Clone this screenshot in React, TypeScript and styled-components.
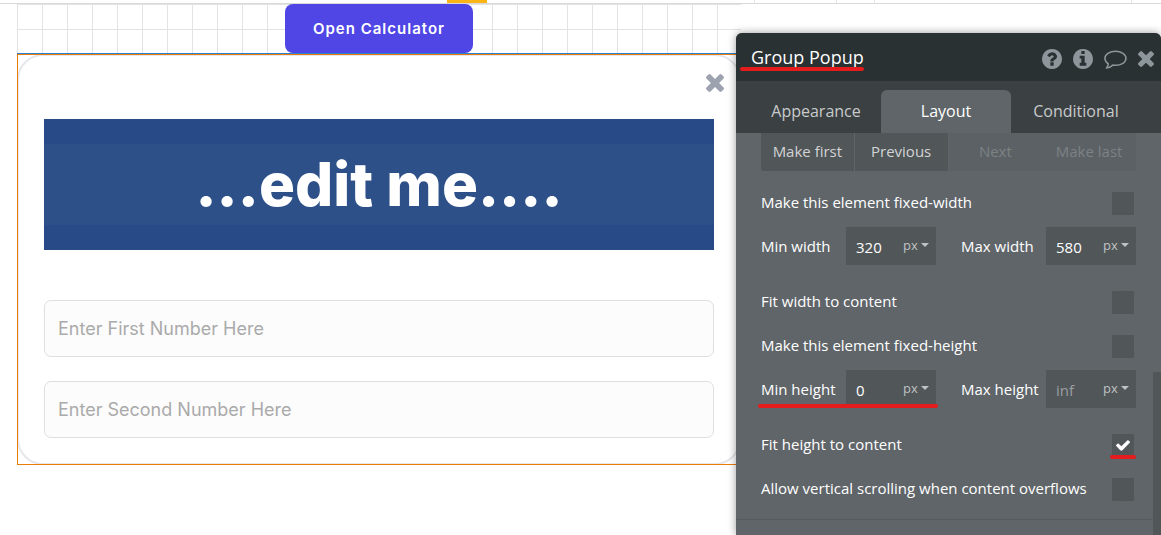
import React, { useState } from 'react';
import styled, { createGlobalStyle } from 'styled-components';

const GlobalStyle = createGlobalStyle`
  * { box-sizing: border-box; }
  body { margin: 0; background: #fff; font-family: "Open Sans", "Noto Sans", sans-serif; }
  button, input, select { font: inherit; color: inherit; border: 0; margin: 0; padding: 0; background: none; }
  button { cursor: pointer; }
`;

const Page = styled.div`
  display: flex;
  flex-direction: column;
  height: 100vh;
  overflow: hidden;
`;

const Ruler = styled.div`
  display: flex;
  justify-content: space-between;
  flex: none;
  height: 4px;
  border-bottom: 1px solid #d9d9d9;
  padding-left: 447px;
`;

const RulerMarker = styled.div`
  width: 40px;
  height: 3px;
  background: #fdb515;
`;

const RulerTicks = styled.div`
  display: grid;
  grid-template-columns: 82px 38px 257px 30px;
  & > span { border-left: 1px solid #e6e6e6; }
`;

const Workspace = styled.div`
  display: flex;
  flex: 1;
  min-height: 0;
`;

const Canvas = styled.main`
  flex: 1;
  min-width: 0;
  padding-left: 17px;
  font-family: Inter, sans-serif;
  font-optical-sizing: none;
`;

const GridArea = styled.div`
  display: flex;
  justify-content: center;
  height: 50px;
  border-bottom: 1px solid #2b7fd0;
  background-image:
    linear-gradient(to right, transparent 24px, #e3e3e3 24px),
    linear-gradient(to bottom, transparent 24px, #e3e3e3 24px);
  background-size: 25px 25px;
  background-position: 1px 1px;
`;

const OpenButton = styled.button`
  width: 188px;
  height: 49px;
  border-radius: 8px;
  background: #4f46e5;
  color: #fff;
  font-size: 15px;
  font-weight: 600;
  letter-spacing: 1px;
`;

const Selection = styled.div`
  position: relative;
  &::after {
    content: "";
    position: absolute;
    inset: 0;
    border: 1px solid #ea7d0c;
    pointer-events: none;
  }
`;

const Popup = styled.section`
  display: flex;
  flex-direction: column;
  border: 2px solid #e5e7eb;
  border-radius: 26px;
  padding: 15px 25px 25px;
`;

const CloseButton = styled.button`
  display: flex;
  align-self: flex-end;
  align-items: center;
  justify-content: center;
  width: 22px;
  height: 24px;
  margin-right: -12px;
  margin-bottom: 24px;
  color: #9ca3af;
`;

const Banner = styled.div`
  border: solid #284b87;
  border-width: 25px 0;
  background: #2d5089;
  margin-bottom: 50px;
`;

const BannerTitle = styled.h1`
  margin: 0;
  color: #fff;
  font-size: 60px;
  font-weight: 800;
  line-height: 81px;
  text-align: center;
`;

const NumberInput = styled.input`
  && {
    height: 57px;
    padding: 0 13px;
    border: 1px solid #dfdfdf;
    border-radius: 7px;
    background: #fcfcfc;
    font-size: 18px;
  }
  &::placeholder { color: #aaa; opacity: 1; }
  & + & { margin-top: 24px; }
`;

const Panel = styled.aside`
  position: relative;
  display: flex;
  flex-direction: column;
  flex: none;
  width: 425px;
  margin: 29px 0 0 -5px;
  border-radius: 6px 6px 0 0;
  background: #5f6569;
  box-shadow: 0 0 8px rgba(0, 0, 0, 0.4);
  color: #fff;
  font-size: 15px;
`;

const PanelHeader = styled.header`
  display: flex;
  align-items: center;
  justify-content: space-between;
  height: 48px;
  padding: 0 7px 0 15px;
  border-radius: 6px 6px 0 0;
  background: #2a3133;
`;

const PanelTitle = styled.h2`
  position: relative;
  margin: 0;
  font-size: 18px;
  font-weight: 400;
  line-height: 24px;
`;

const Mark = styled.span<{ $left: number; $right: number; $bottom: number }>`
  position: absolute;
  left: ${(p) => p.$left}px;
  right: ${(p) => p.$right}px;
  bottom: ${(p) => p.$bottom}px;
  height: 4px;
  border-radius: 2px;
  background: #e51c1e;
  pointer-events: none;
`;

const HeaderActions = styled.div`
  display: flex;
  align-items: center;
  gap: 11px;
  padding-top: 4px;
  color: #8d979b;
`;

const IconButton = styled.button`
  display: flex;
`;

const Tabs = styled.nav`
  display: flex;
  align-items: flex-end;
  justify-content: center;
  height: 52px;
  padding-right: 5px;
  background: #3b4042;
`;

const Tab = styled.button<{ $active?: boolean }>`
  && { padding-bottom: 2px; }
  width: 130px;
  height: 43px;
  border-radius: 6px 6px 0 0;
  background: ${(p) => (p.$active ? '#5f6569' : 'transparent')};
  color: ${(p) => (p.$active ? '#fff' : '#c8cbcc')};
  font-size: 16px;
`;

const PanelBody = styled.div`
  flex: 1;
  min-height: 0;
  overflow: hidden;
`;

const Settings = styled.div`
  padding: 0 25px 8px;
  border-bottom: 1px solid #555b5e;
`;

const OrderButtons = styled.div`
  display: grid;
  grid-template-columns: repeat(4, 1fr);
  height: 38px;
  margin-bottom: 10px;
  border-radius: 0 0 3px 3px;
  background: #5b6164;
  overflow: hidden;
`;

const OrderButton = styled.button`
  && { padding-bottom: 2px; }
  border-right: 1px solid #5f6569;
  background: #515659;
  color: #d2d4d5;
  &:disabled { border: 0; background: transparent; color: #7d8285; }
`;

const CheckRow = styled.label`
  display: flex;
  align-items: center;
  justify-content: space-between;
  height: 44px;
  padding-right: 2px;
`;

const CheckText = styled.span`
  padding-bottom: 2px;
`;

const CheckBox = styled.span`
  position: relative;
  display: grid;
  place-items: center;
  width: 22px;
  height: 23px;
  border-radius: 1px;
  background: #515659;
  svg { grid-area: 1 / 1; pointer-events: none; }
`;

const CheckInput = styled.input`
  grid-area: 1 / 1;
  width: 22px;
  height: 23px;
  appearance: none;
`;

const FieldRow = styled.div`
  display: grid;
  grid-template-columns: 1fr 1fr;
  column-gap: 25px;
  height: 42px;
  margin-bottom: 13px;
`;

const Field = styled.div`
  position: relative;
  display: flex;
  align-items: center;
  justify-content: space-between;
  white-space: nowrap;
`;

const FieldBox = styled.div`
  display: flex;
  align-items: center;
  width: 90px;
  height: 38px;
  background: #515659;
`;

const ValueInput = styled.input`
  && { width: 55px; height: 38px; padding: 2px 0 0 10px; }
  &::placeholder { color: #9a9ea0; opacity: 1; }
`;

const Unit = styled.span`
  display: flex;
  align-items: center;
  gap: 3px;
  padding-bottom: 2px;
  color: #bfc2c3;
`;

const UnitSelect = styled.select`
  && { width: 17px; padding-left: 2px; font-size: 13px; appearance: none; }
`;

const ScrollThumb = styled.div`
  position: absolute;
  top: 339px;
  right: 0;
  bottom: 0;
  width: 8px;
  background: #515659;
`;

function CrossIcon({ size }: { size: number }) {
  return (
    <svg width={size} height={size} viewBox="302 366 1188 1188" fill="currentColor">
      <path d="M1490 1322q0 40-28 68l-136 136q-28 28-68 28t-68-28l-294-294-294 294q-28 28-68 28t-68-28l-136-136q-28-28-28-68t28-68l294-294-294-294q-28-28-28-68t28-68l136-136q28-28 68-28t68 28l294 294 294-294q28-28 68-28t68 28l136 136q28 28 28 68t-28 68l-294 294 294 294q28 28 28 68z" />
    </svg>
  );
}

function TickIcon() {
  return (
    <svg width="14" height="11" viewBox="121 334 1550 1188" fill="currentColor">
      <path d="M1671 566q0 40-28 68l-724 724-136 136q-28 28-68 28t-68-28l-136-136-362-362q-28-28-28-68t28-68l136-136q28-28 68-28t68 28l294 295 656-657q28-28 68-28t68 28l136 136q28 28 28 68z" />
    </svg>
  );
}

function Check({ label, checked = false, marked = false }: { label: string; checked?: boolean; marked?: boolean }) {
  const [on, setOn] = useState(checked);
  return (
    <CheckRow>
      <CheckText>{label}</CheckText>
      <CheckBox>
        <CheckInput type="checkbox" checked={on} onChange={() => setOn(!on)} />
        {on && <TickIcon />}
        {marked && <Mark $left={-2} $right={-2} $bottom={-2} />}
      </CheckBox>
    </CheckRow>
  );
}

function SizeField({ label, value, marked = false }: { label: string; value?: string; marked?: boolean }) {
  const id = label.toLowerCase().replace(' ', '-');
  return (
    <Field>
      <label htmlFor={id}>{label}</label>
      <FieldBox>
        <ValueInput id={id} defaultValue={value} placeholder="inf" />
        <Unit>
          <UnitSelect aria-label={`${label} unit`}>
            <option>px</option>
          </UnitSelect>
          <svg width="8" height="4" viewBox="0 0 8 4" fill="currentColor"><path d="M0 0h8L4 4z" /></svg>
        </Unit>
      </FieldBox>
      {marked && <Mark $left={-3} $right={-2} $bottom={2} />}
    </Field>
  );
}

export default function App() {
  return (
    <Page>
      <GlobalStyle />
      <Ruler>
        <RulerMarker />
        <RulerTicks><span /><span /><span /><span /></RulerTicks>
      </Ruler>
      <Workspace>
        <Canvas>
          <GridArea><OpenButton>Open Calculator</OpenButton></GridArea>
          <Selection>
            <Popup>
              <CloseButton aria-label="Close popup"><CrossIcon size={18} /></CloseButton>
              <Banner><BannerTitle>...edit me....</BannerTitle></Banner>
              <NumberInput aria-label="First number" placeholder="Enter First Number Here" />
              <NumberInput aria-label="Second number" placeholder="Enter Second Number Here" />
            </Popup>
          </Selection>
        </Canvas>
        <Panel>
          <PanelHeader>
            <PanelTitle>Group Popup<Mark $left={-11} $right={0} $bottom={-2} /></PanelTitle>
            <HeaderActions>
              <IconButton aria-label="Help">
                <svg width="20" height="20" viewBox="0 0 1536 1536" fill="currentColor"><path d="M896 1248v-192q0-14-9-23t-23-9H672q-14 0-23 9t-9 23v192q0 14 9 23t23 9h192q14 0 23-9t9-23zm256-672q0-88-55.500-163T958 297t-170-41q-243 0-371 213-15 24 8 42l132 100q7 6 19 6 16 0 25-12 53-68 86-92 34-24 86-24 48 0 85.500 26t37.500 59q0 38-20 61t-68 45q-63 28-115.500 86.500T640 892v36q0 14 9 23t23 9h192q14 0 23-9t9-23q0-19 21.500-49.500T972 829q32-18 49-28.500t46-35 44.500-48 28-60.500T1152 576zm384 192q0 209-103 385.500T1153.500 1433 768 1536t-385.500-103T103 1153.500 0 768t103-385.500T382.500 103 768 0t385.500 103T1433 382.500 1536 768z" /></svg>
              </IconButton>
              <IconButton aria-label="Information">
                <svg width="20" height="20" viewBox="0 0 1536 1536" fill="currentColor"><path d="M1024 1248v-160q0-14-9-23t-23-9h-96V544q0-14-9-23t-23-9H544q-14 0-23 9t-9 23v160q0 14 9 23t23 9h96v320h-96q-14 0-23 9t-9 23v160q0 14 9 23t23 9h448q14 0 23-9t9-23zM896 352V192q0-14-9-23t-23-9H672q-14 0-23 9t-9 23v160q0 14 9 23t23 9h192q14 0 23-9t9-23zm640 416q0 209-103 385.500T1153.500 1433 768 1536t-385.500-103T103 1153.500 0 768t103-385.500T382.500 103 768 0t385.500 103T1433 382.500 1536 768z" /></svg>
              </IconButton>
              <IconButton aria-label="Comments">
                <svg width="23" height="20" viewBox="0 0 23 20" fill="none" stroke="currentColor" strokeWidth="1.500" strokeLinejoin="round"><path d="M11.500 2.300c5.900 0 10.500 3.100 10.500 7s-4.600 7-10.500 7c-.9 0-1.800-.1-2.700-.2-1.900 1.800-4 2.700-6.400 3 1-1.300 1.800-2.600 2-4.200C2.300 13.600.9 11.600.9 9.300c0-3.900 4.700-7 10.600-7z" /></svg>
              </IconButton>
              <IconButton aria-label="Close panel"><CrossIcon size={16} /></IconButton>
            </HeaderActions>
          </PanelHeader>
          <Tabs>
            <Tab>Appearance</Tab>
            <Tab $active>Layout</Tab>
            <Tab>Conditional</Tab>
          </Tabs>
          <PanelBody>
            <Settings>
              <OrderButtons>
                <OrderButton>Make first</OrderButton>
                <OrderButton>Previous</OrderButton>
                <OrderButton disabled>Next</OrderButton>
                <OrderButton disabled>Make last</OrderButton>
              </OrderButtons>
              <Check label="Make this element fixed-width" />
              <FieldRow>
                <SizeField label="Min width" value="320" />
                <SizeField label="Max width" value="580" />
              </FieldRow>
              <Check label="Fit width to content" />
              <Check label="Make this element fixed-height" />
              <FieldRow>
                <SizeField label="Min height" value="0" marked />
                <SizeField label="Max height" />
              </FieldRow>
              <Check label="Fit height to content" checked marked />
              <Check label="Allow vertical scrolling when content overflows" />
            </Settings>
          </PanelBody>
          <ScrollThumb />
        </Panel>
      </Workspace>
    </Page>
  );
}
